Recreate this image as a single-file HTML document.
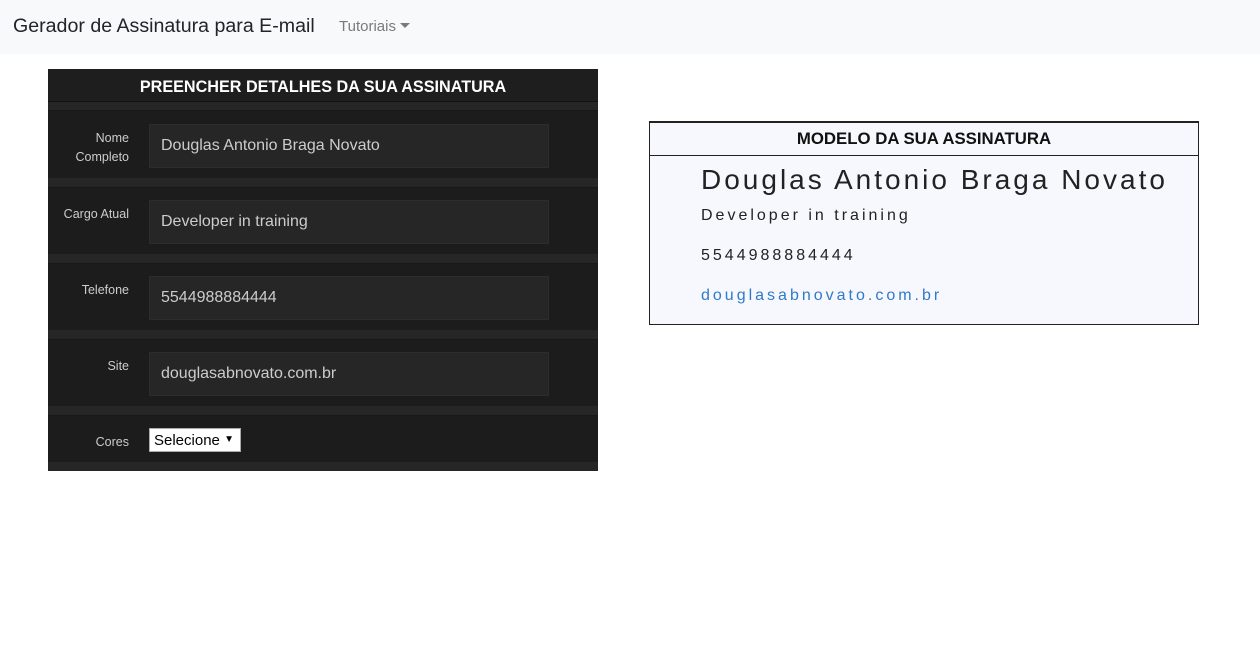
<!DOCTYPE html>
<html><head><meta charset="utf-8"><style>
*{margin:0;padding:0;box-sizing:border-box}
body{width:1260px;height:672px;background:#fff;font-family:"Liberation Sans",sans-serif;position:relative;overflow:hidden}
.nav{position:absolute;left:0;top:0;width:1260px;height:54px;background:#f8f9fa}
.brand{position:absolute;left:13px;top:15px;font-size:19.6px;color:#212529}
.tut{position:absolute;left:339px;top:18px;font-size:15px;color:#7a7a7a}
.tut:after{content:"";display:inline-block;margin-left:4px;vertical-align:3px;border-top:5px solid #7a7a7a;border-left:5px solid transparent;border-right:5px solid transparent}
.panel{position:absolute;left:48px;top:69px;width:550px;height:402px;background:#262626}
.ph{position:absolute;left:0;top:0;width:550px;height:33px;background:#1e1e1e;border-bottom:1px solid #111;color:#fff;font-weight:bold;font-size:16.2px;text-align:center;line-height:36px}
.row{position:absolute;left:0;width:550px;background:#1c1c1c;border-top:1px solid #181818}
.lbl{position:absolute;right:469px;color:#ccc;font-size:12.5px;text-align:right;line-height:19px}
.inp{position:absolute;left:101px;width:400px;height:44px;background:#262626;border:1px solid #2c2c2c;color:#ccc;font-size:16px;line-height:42px;padding-left:11px}
.sel{position:absolute;left:101px;top:12px;width:92px;height:24px;background:#fff;border:1px solid #aaa;color:#000;font-size:15px;line-height:22px;padding-left:4px}
.card{position:absolute;left:649px;top:121px;width:550px;height:204px;background:#f7f8fd;border:1px solid #222;border-top-width:2px}
.ch{height:33px;border-bottom:1px solid #222;text-align:center;font-weight:bold;font-size:16.8px;line-height:32px;color:#111}
.s{position:absolute;left:51px;color:#222;letter-spacing:3px}
</style></head><body>
<div class="nav"><div class="brand">Gerador de Assinatura para E-mail</div><div class="tut">Tutoriais</div></div>
<div class="panel">
<div class="ph">PREENCHER DETALHES DA SUA ASSINATURA</div>
<div class="row" style="top:41px;height:68px"><div class="lbl" style="top:18px">Nome<br>Completo</div><div class="inp" style="top:13px">Douglas Antonio Braga Novato</div></div>
<div class="row" style="top:118px;height:67px"><div class="lbl" style="top:17px">Cargo Atual</div><div class="inp" style="top:12px">Developer in training</div></div>
<div class="row" style="top:194px;height:67px"><div class="lbl" style="top:17px">Telefone</div><div class="inp" style="top:12px">5544988884444</div></div>
<div class="row" style="top:270px;height:67px"><div class="lbl" style="top:17px">Site</div><div class="inp" style="top:12px">douglasabnovato.com.br</div></div>
<div class="row" style="top:346px;height:47px"><div class="lbl" style="top:17px">Cores</div><div class="sel">Selecione <span style="font-size:10px;vertical-align:3px">▼</span></div></div>
</div>
<div class="card">
<div class="ch">MODELO DA SUA ASSINATURA</div>
<div class="s" style="top:41px;font-size:28px;letter-spacing:3px">Douglas Antonio Braga Novato</div>
<div class="s" style="top:84px;font-size:16px">Developer in training</div>
<div class="s" style="top:124px;font-size:16px">5544988884444</div>
<div class="s" style="top:164px;font-size:16px;color:#2f7ac8">douglasabnovato.com.br</div>
</div>
</body></html>
